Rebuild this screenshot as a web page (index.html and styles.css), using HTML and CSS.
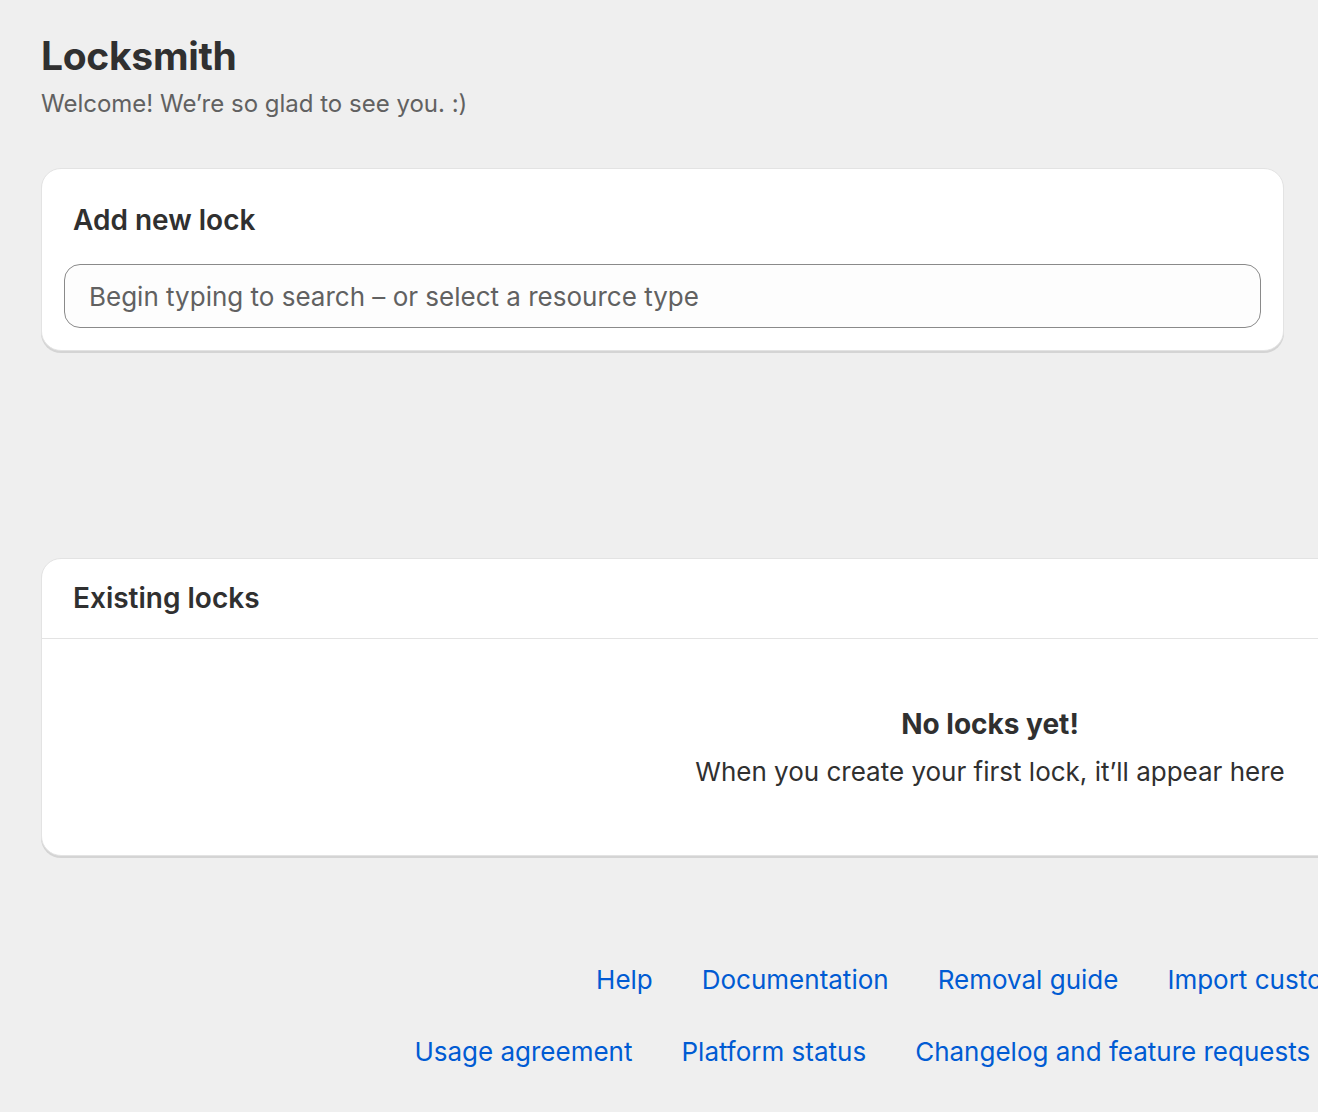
FILE: index.html
```html
<!DOCTYPE html>
<html lang="en">
<head>
<meta charset="utf-8">
<title>Locksmith</title>
<link rel="stylesheet" href="styles.css">
</head>
<body>
<div class="page">
  <header class="page-header">
    <h1 class="page-title">Locksmith</h1>
    <p class="page-subtitle">Welcome! We’re so glad to see you. :)</p>
  </header>

  <section class="card card-add">
    <h2 class="card-title">Add new lock</h2>
    <div class="search-field">
      <input class="search-input" type="text" placeholder="Begin typing to search – or select a resource type">
    </div>
  </section>

  <section class="card card-existing">
    <div class="card-header">
      <h2 class="card-title">Existing locks</h2>
    </div>
    <div class="empty-state">
      <p class="empty-title">No locks yet!</p>
      <p class="empty-text">When you create your first lock, it’ll appear here</p>
    </div>
  </section>

  <footer class="footer">
    <nav class="footer-row">
      <a class="footer-link" href="#">Help</a>
      <a class="footer-link" href="#">Documentation</a>
      <a class="footer-link" href="#">Removal guide</a>
      <a class="footer-link" href="#">Import customers</a>
    </nav>
    <nav class="footer-row">
      <a class="footer-link" href="#">Usage agreement</a>
      <a class="footer-link" href="#">Platform status</a>
      <a class="footer-link" href="#">Changelog and feature requests</a>
      <a class="footer-link" href="#">Terms of service</a>
    </nav>
  </footer>
</div>
</body>
</html>
```
FILE: styles.css
```css
html, body {
  margin: 0;
  padding: 0;
}
body {
  background: #efefef;
  font-family: Inter, "Noto Sans", "Liberation Sans", sans-serif;
  color: #303030;
  overflow: hidden;
  width: 1318px;
  height: 1112px;
}
.page {
  width: 1898px;
  padding: 30px 0 0 41px;
}
.page-header {
  margin-bottom: 48px;
}
.page-title {
  margin: 0;
  font-size: 39px;
  line-height: 52px;
  font-weight: 700;
  color: #303030;
  letter-spacing: -0.3px;
}
.page-subtitle {
  margin: 6px 0 0;
  font-size: 24px;
  line-height: 32px;
  color: #616161;
}
.card {
  background: #ffffff;
  border-radius: 20px;
  border: 1px solid #e3e3e3;
  box-shadow: 0 2px 0 #d4d4d4;
  box-sizing: border-box;
}
.card-add {
  width: 1243px;
  padding: 31px 22px 22px 22px;
}
.card-title {
  margin: 0 0 0 9px;
  font-size: 28px;
  line-height: 40px;
  font-weight: 600;
  color: #303030;
}
.search-field {
  margin-top: 24px;
}
.search-input {
  display: block;
  box-sizing: border-box;
  width: 100%;
  height: 64px;
  border: 1px solid #8a8a8a;
  border-radius: 16px;
  background: #fdfdfd;
  padding: 0 24px;
  font-family: inherit;
  font-size: 26px;
  color: #303030;
  outline: none;
}
.search-input::placeholder {
  color: #616161;
}
.card-existing {
  width: 1898px;
  margin-top: 207px;
}
.card-header {
  padding: 19px 31px 20px;
  border-bottom: 1px solid #e3e3e3;
}
.card-header .card-title {
  margin: 0;
}
.empty-state {
  height: 216px;
  box-sizing: border-box;
  padding-top: 67px;
  text-align: center;
}
.empty-title {
  margin: 0;
  font-size: 28px;
  line-height: 36px;
  font-weight: 700;
  color: #303030;
}
.empty-text {
  margin: 12px 0 0;
  font-size: 26px;
  line-height: 36px;
  color: #303030;
}
.footer {
  margin-top: 106px;
  display: flex;
  flex-direction: column;
  gap: 36px;
}
.footer-row {
  display: flex;
  justify-content: center;
  gap: 49px;
}
.footer-link {
  font-size: 26px;
  line-height: 36px;
  color: #005bd3;
  text-decoration: none;
}
```
